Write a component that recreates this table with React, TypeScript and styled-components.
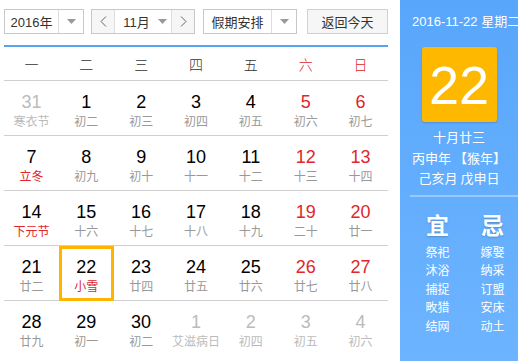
import React from "react";
import styled, { createGlobalStyle } from "styled-components";

const GlobalStyle = createGlobalStyle`
  html, body {
    margin: 0;
    padding: 0;
    background: #fff;
  }
  body {
    font-family: "Liberation Sans", "Noto Sans CJK SC", sans-serif;
  }
`;

type Day = {
  num: number;
  lunar: string;
  other?: boolean;
  weekend?: boolean;
  festival?: boolean;
  today?: boolean;
};

const weeks: Day[][] = [
  [
    { num: 31, lunar: "寒衣节", other: true },
    { num: 1, lunar: "初二" },
    { num: 2, lunar: "初三" },
    { num: 3, lunar: "初四" },
    { num: 4, lunar: "初五" },
    { num: 5, lunar: "初六", weekend: true },
    { num: 6, lunar: "初七", weekend: true },
  ],
  [
    { num: 7, lunar: "立冬", festival: true },
    { num: 8, lunar: "初九" },
    { num: 9, lunar: "初十" },
    { num: 10, lunar: "十一" },
    { num: 11, lunar: "十二" },
    { num: 12, lunar: "十三", weekend: true },
    { num: 13, lunar: "十四", weekend: true },
  ],
  [
    { num: 14, lunar: "下元节", festival: true },
    { num: 15, lunar: "十六" },
    { num: 16, lunar: "十七" },
    { num: 17, lunar: "十八" },
    { num: 18, lunar: "十九" },
    { num: 19, lunar: "二十", weekend: true },
    { num: 20, lunar: "廿一", weekend: true },
  ],
  [
    { num: 21, lunar: "廿二" },
    { num: 22, lunar: "小雪", festival: true, today: true },
    { num: 23, lunar: "廿四" },
    { num: 24, lunar: "廿五" },
    { num: 25, lunar: "廿六" },
    { num: 26, lunar: "廿七", weekend: true },
    { num: 27, lunar: "廿八", weekend: true },
  ],
  [
    { num: 28, lunar: "廿九" },
    { num: 29, lunar: "初一" },
    { num: 30, lunar: "初二" },
    { num: 1, lunar: "艾滋病日", other: true },
    { num: 2, lunar: "初四", other: true },
    { num: 3, lunar: "初五", other: true },
    { num: 4, lunar: "初六", other: true },
  ],
];

const weekNames = ["一", "二", "三", "四", "五", "六", "日"];
const good = ["祭祀", "沐浴", "捕捉", "畋猎", "结网"];
const bad = ["嫁娶", "纳采", "订盟", "安床", "动土"];

const Caret = () => (
  <svg width="9" height="5" viewBox="0 0 9 5">
    <path d="M0 0h9L4.5 5z" fill="#999" />
  </svg>
);

const Arrow = ({ dir }: { dir: "left" | "right" }) => (
  <svg width="7" height="11" viewBox="0 0 7 11">
    <path
      d={dir === "left" ? "M6 0.5L1 5.5l5 5" : "M1 0.5l5 5-5 5"}
      fill="none"
      stroke="#666"
      strokeWidth="1"
    />
  </svg>
);

const App = () => (
  <>
    <GlobalStyle />
    <Wrapper>
      <Main>
        <Toolbar>
          <Select $width={80}>
            <SelectText>2016年</SelectText>
            <SelectCaret>
              <Caret />
            </SelectCaret>
          </Select>
          <MonthGroup>
            <NavButton>
              <Arrow dir="left" />
            </NavButton>
            <MonthSelect>
              <span>11月</span>
              <Caret />
            </MonthSelect>
            <NavButton>
              <Arrow dir="right" />
            </NavButton>
          </MonthGroup>
          <Select $width={94}>
            <SelectText>假期安排</SelectText>
            <SelectCaret>
              <Caret />
            </SelectCaret>
          </Select>
          <TodayButton>返回今天</TodayButton>
        </Toolbar>

        <WeekHeader>
          {weekNames.map((w, i) => (
            <WeekName key={w} $red={i >= 5}>
              {w}
            </WeekName>
          ))}
        </WeekHeader>

        {weeks.map((week, r) => (
          <WeekRow key={r} $last={r === weeks.length - 1}>
            {week.map((d, i) => (
              <Cell key={i} $today={d.today}>
                <DayNum $other={d.other} $red={d.weekend}>
                  {d.num}
                </DayNum>
                <Lunar $other={d.other} $red={d.festival}>
                  {d.lunar}
                </Lunar>
              </Cell>
            ))}
          </WeekRow>
        ))}
      </Main>

      <Side>
        <SideDate>2016-11-22 星期二</SideDate>
        <BigDay>22</BigDay>
        <LunarInfo>
          <div>十月廿三</div>
          <div>丙申年 【猴年】</div>
          <div>己亥月 戊申日</div>
        </LunarInfo>
        <SideDivider />
        <Almanac>
          <AlmanacCol>
            <AlmanacTitle>宜</AlmanacTitle>
            {good.map((t) => (
              <AlmanacItem key={t}>{t}</AlmanacItem>
            ))}
          </AlmanacCol>
          <AlmanacCol>
            <AlmanacTitle>忌</AlmanacTitle>
            {bad.map((t) => (
              <AlmanacItem key={t}>{t}</AlmanacItem>
            ))}
          </AlmanacCol>
        </Almanac>
      </Side>
    </Wrapper>
  </>
);

const Wrapper = styled.div`
  display: flex;
  width: 518px;
  height: 361px;
  overflow: hidden;
`;

const Main = styled.div`
  width: 384px;
  padding: 9px 12px 0 4px;
  font-family: "Liberation Sans", "Noto Sans CJK SC", sans-serif;
`;

const Toolbar = styled.div`
  display: flex;
  align-items: center;
  height: 25px;
  padding-bottom: 11px;
  border-bottom: 2px solid #5aa4ef;
`;

const Select = styled.div<{ $width: number }>`
  box-sizing: border-box;
  display: flex;
  width: ${(p) => p.$width}px;
  height: 25px;
  border: 1px solid #c8c8c8;
  background: #fff;
  margin-right: 7px;
  &:nth-of-type(3) {
    margin-right: 10px;
  }
`;

const SelectText = styled.div`
  flex: 1;
  display: flex;
  align-items: center;
  justify-content: center;
  font-size: 13px;
  color: #333;
  font-family: "Liberation Sans", "Noto Sans CJK SC", sans-serif;
`;

const SelectCaret = styled.div`
  width: 24px;
  display: flex;
  align-items: center;
  justify-content: center;
  border-left: 1px solid #ddd;
`;

const MonthGroup = styled.div`
  box-sizing: border-box;
  display: flex;
  width: 104px;
  height: 25px;
  border: 1px solid #c8c8c8;
  margin-right: 8px;
`;

const NavButton = styled.div`
  width: 22px;
  display: flex;
  align-items: center;
  justify-content: center;
  background: #f6f6f6;
`;

const MonthSelect = styled.div`
  flex: 1;
  display: flex;
  align-items: center;
  justify-content: center;
  gap: 8px;
  border-left: 1px solid #ddd;
  border-right: 1px solid #ddd;
  font-size: 13px;
  color: #333;
  padding-left: 4px;
`;

const TodayButton = styled.div`
  box-sizing: border-box;
  width: 81px;
  height: 25px;
  border: 1px solid #d0d0d0;
  background: #f6f6f6;
  display: flex;
  align-items: center;
  justify-content: center;
  font-size: 13px;
  color: #333;
  font-family: "Noto Sans CJK SC", sans-serif;
`;

const WeekHeader = styled.div`
  display: grid;
  grid-template-columns: repeat(7, 1fr);
  height: 33px;
  border-bottom: 1px solid #cfcfcf;
`;

const WeekName = styled.div<{ $red?: boolean }>`
  display: flex;
  align-items: center;
  justify-content: center;
  font-size: 14px;
  font-weight: 300;
  color: ${(p) => (p.$red ? "#e0262c" : "#333")};
  font-family: "Noto Sans CJK SC", sans-serif;
`;

const WeekRow = styled.div<{ $last?: boolean }>`
  display: grid;
  grid-template-columns: repeat(7, 1fr);
  height: ${(p) => (p.$last ? 55 : 54)}px;
  border-bottom: ${(p) => (p.$last ? "none" : "1px solid #cfcfcf")};
`;

const Cell = styled.div<{ $today?: boolean }>`
  box-sizing: border-box;
  display: flex;
  flex-direction: column;
  align-items: center;
  padding-top: ${(p) => (p.$today ? 8 : 11)}px;
  border: ${(p) => (p.$today ? "3px solid #ffb400" : "none")};
  margin-bottom: ${(p) => (p.$today ? "-1px" : "0")};
  position: relative;
  z-index: ${(p) => (p.$today ? 1 : 0)};
`;

const DayNum = styled.div<{ $other?: boolean; $red?: boolean }>`
  font-size: 18px;
  line-height: 20px;
  font-family: "Liberation Sans", Arial, sans-serif;
  color: ${(p) => (p.$other ? "#bbb" : p.$red ? "#e0262c" : "#000")};
`;

const Lunar = styled.div<{ $other?: boolean; $red?: boolean }>`
  margin-top: 1px;
  font-size: 12px;
  line-height: 16px;
  font-family: "Noto Sans CJK SC", sans-serif;
  color: ${(p) => (p.$other ? "#bbb" : p.$red ? "#e0262c" : "#999")};
`;

const Side = styled.div`
  width: 118px;
  flex-shrink: 0;
  background: linear-gradient(#58a6fb, #6db4ff);
  color: #fff;
  display: flex;
  flex-direction: column;
  align-items: center;
  padding-top: 13px;
  box-sizing: border-box;
`;

const SideDate = styled.div`
  font-size: 13px;
  line-height: 18px;
  white-space: nowrap;
  font-family: "Liberation Sans", "Noto Sans CJK SC", sans-serif;
  padding-left: 12px;
  align-self: flex-start;
`;

const BigDay = styled.div`
  margin-top: 16px;
  width: 75px;
  height: 75px;
  border-radius: 3px;
  background: #ffb800;
  box-shadow: 0 1px 2px rgba(0, 0, 0, 0.15);
  display: flex;
  align-items: center;
  justify-content: center;
  font-size: 54px;
  font-family: "Liberation Sans", Arial, sans-serif;
  color: #fff;
`;

const LunarInfo = styled.div`
  margin-top: 5px;
  font-size: 13px;
  line-height: 20.5px;
  text-align: center;
  font-family: "Noto Sans CJK SC", sans-serif;
  white-space: nowrap;
`;

const SideDivider = styled.div`
  align-self: stretch;
  margin: 6px 0 0 10px;
  height: 2px;
  background: rgba(255, 255, 255, 0.35);
`;

const Almanac = styled.div`
  display: flex;
  gap: 31px;
  margin-top: 14px;
  padding-left: 12px;
`;

const AlmanacCol = styled.div`
  display: flex;
  flex-direction: column;
  align-items: center;
`;

const AlmanacTitle = styled.div`
  font-size: 23px;
  line-height: 26px;
  font-weight: bold;
  font-family: "Noto Sans CJK SC", sans-serif;
  text-shadow: 0 1px 2px rgba(0, 0, 0, 0.2);
  margin-bottom: 6px;
`;

const AlmanacItem = styled.div`
  font-size: 12px;
  line-height: 18.5px;
  font-family: "Noto Sans CJK SC", sans-serif;
`;

export default App;
